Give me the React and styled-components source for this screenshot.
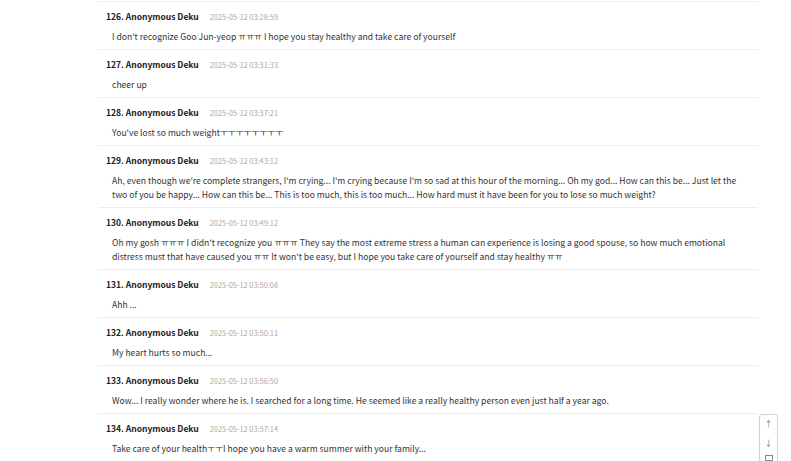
import React from "react";
import styled, { createGlobalStyle } from "styled-components";

const Global = createGlobalStyle`
  html, body { margin: 0; padding: 0; background: #fff; overflow: hidden; }
  body { font-family: "Noto Sans CJK KR", "Noto Sans", sans-serif; }
`;

const Page = styled.div`
  width: 791px;
  height: 461px;
  overflow: hidden;
  position: relative;
  padding-left: 98px;
  box-sizing: border-box;
`;

const List = styled.div`
  width: 660px;
  border-top: 1px solid #ececec;
  margin-top: 1px;
`;

const Row = styled.div`
  border-bottom: 1px solid #ececec;
  padding: 8px 10px 6px 0;
  display: flex;
  flex-direction: column;
  gap: 6px;
`;

const Head = styled.div`
  display: flex;
  align-items: baseline;
  gap: 11px;
  padding-left: 8px;
  line-height: 13px;
`;

const Name = styled.span`
  font-size: 8.5px;
  font-weight: 700;
  color: #222;
`;

const Time = styled.span`
  font-size: 7.4px;
  color: #aaa;
`;

const Body = styled.div`
  padding-left: 14px;
  font-size: 8.6px;
  line-height: 14px;
  color: #333;
`;

const Float = styled.div`
  position: absolute;
  left: 759px;
  top: 414px;
  width: 19px;
  height: 60px;
  border: 1px solid #d4d4d4;
  border-radius: 3px;
  background: #fff;
  display: flex;
  flex-direction: column;
  align-items: center;
  padding-top: 2px;
  gap: 6px;
  box-sizing: border-box;
`;

const FloatBtn = styled.div`
  font-size: 8px;
  line-height: 13px;
  color: #777;
  display: flex;
  align-items: center;
  justify-content: center;
`;

const comments = [
  ["126", "2025-05-12 03:28:59", "I don't recognize Goo Jun-yeop ㅠㅠㅠ I hope you stay healthy and take care of yourself"],
  ["127", "2025-05-12 03:31:33", "cheer up"],
  ["128", "2025-05-12 03:37:21", "You've lost so much weightㅜㅜㅜㅜㅜㅜㅜㅜ"],
  ["129", "2025-05-12 03:43:12", "Ah, even though we're complete strangers, I'm crying... I'm crying because I'm so sad at this hour of the morning... Oh my god... How can this be... Just let the two of you be happy... How can this be... This is too much, this is too much... How hard must it have been for you to lose so much weight?"],
  ["130", "2025-05-12 03:49:12", "Oh my gosh ㅠㅠㅠ I didn't recognize you ㅠㅠㅠ They say the most extreme stress a human can experience is losing a good spouse, so how much emotional distress must that have caused you ㅠㅠ It won't be easy, but I hope you take care of yourself and stay healthy ㅠㅠ"],
  ["131", "2025-05-12 03:50:08", "Ahh ..."],
  ["132", "2025-05-12 03:50:11", "My heart hurts so much..."],
  ["133", "2025-05-12 03:56:50", "Wow... I really wonder where he is. I searched for a long time. He seemed like a really healthy person even just half a year ago."],
  ["134", "2025-05-12 03:57:14", "Take care of your healthㅜㅜI hope you have a warm summer with your family..."],
];

export default function App() {
  return (
    <Page>
      <Global />
      <List>
        {comments.map(([n, t, b]) => (
          <Row key={n}>
            <Head>
              <Name>{n}. Anonymous Deku</Name>
              <Time>{t}</Time>
            </Head>
            <Body>{b}</Body>
          </Row>
        ))}
      </List>
      <Float>
        <FloatBtn>↑</FloatBtn>
        <FloatBtn>↓</FloatBtn>
        <FloatBtn>
          <svg width="8" height="8" viewBox="0 0 8 8">
            <rect x="0.5" y="0.5" width="7" height="5" fill="none" stroke="#888" />
          </svg>
        </FloatBtn>
      </Float>
    </Page>
  );
}
